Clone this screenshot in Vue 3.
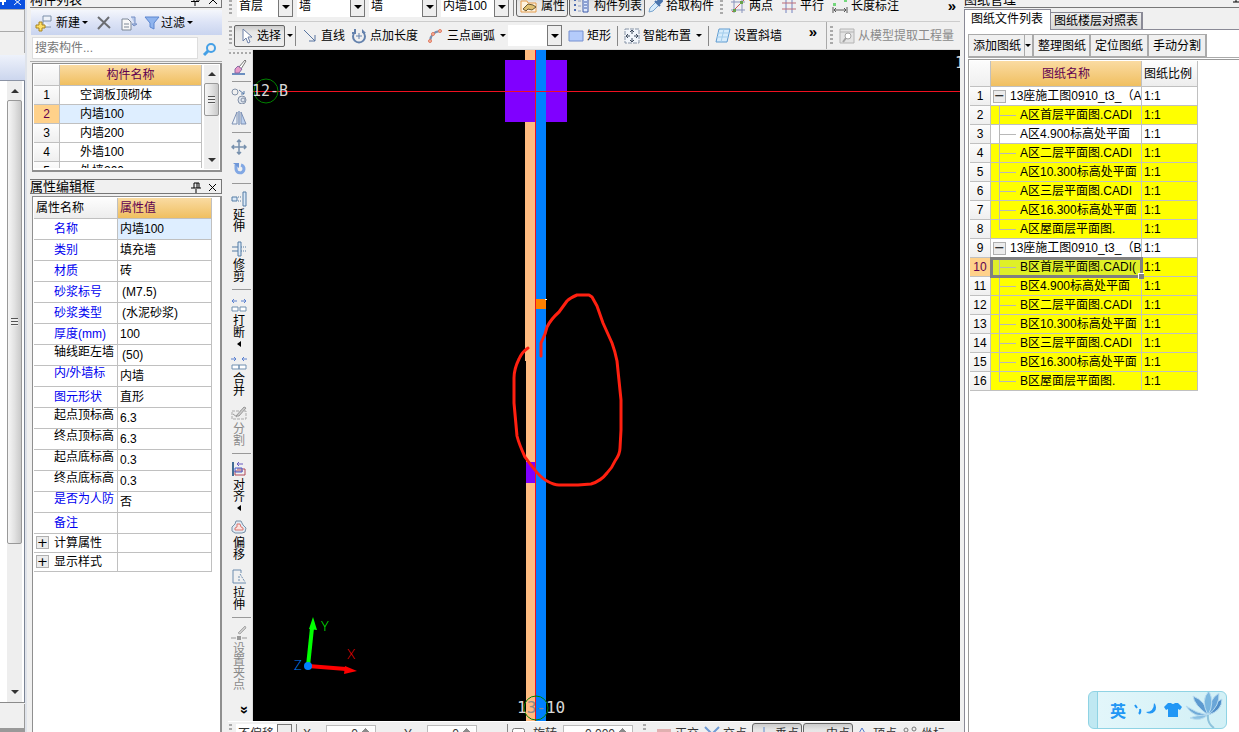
<script setup>
const components = ['空调板顶砌体', '内墙100', '内墙200', '外墙100', '外墙200']

const properties = [
  { name: '名称', value: '内墙100', selected: true },
  { name: '类别', value: '填充墙' },
  { name: '材质', value: '砖' },
  { name: '砂浆标号', value: '(M7.5)', inset: true },
  { name: '砂浆类型', value: '(水泥砂浆)', inset: true },
  { name: '厚度(mm)', value: '100' },
  { name: '轴线距左墙', value: '(50)', plain: true, inset: true },
  { name: '内/外墙标', value: '内墙', up: true },
  { name: '图元形状', value: '直形' },
  { name: '起点顶标高', value: '6.3', plain: true },
  { name: '终点顶标高', value: '6.3', plain: true },
  { name: '起点底标高', value: '0.3', plain: true },
  { name: '终点底标高', value: '0.3', plain: true },
  { name: '是否为人防', value: '否', up: true },
  { name: '备注', value: '' },
]
const groups = ['计算属性', '显示样式']

const drawings = [
  { name: '13座施工图0910_t3_（A', root: true },
  { name: 'A区首层平面图.CADI', hit: true },
  { name: 'A区4.900标高处平面' },
  { name: 'A区二层平面图.CADI', hit: true },
  { name: 'A区10.300标高处平面', hit: true },
  { name: 'A区三层平面图.CADI', hit: true },
  { name: 'A区16.300标高处平面', hit: true },
  { name: 'A区屋面层平面图.', hit: true, last: true },
  { name: '13座施工图0910_t3_（B', root: true },
  { name: 'B区首层平面图.CADI(', hit: true, selected: true },
  { name: 'B区4.900标高处平面', hit: true },
  { name: 'B区二层平面图.CADI', hit: true },
  { name: 'B区10.300标高处平面', hit: true },
  { name: 'B区三层平面图.CADI', hit: true },
  { name: 'B区16.300标高处平面', hit: true },
  { name: 'B区屋面层平面图.', hit: true, last: true },
]
</script>

<template>
  <div class="app">
    <aside class="sliver">
      <div class="sliver-title">
        <svg width="24" height="9"><path d="M3 0v5M0 1h6" stroke="#fff" stroke-width="2" /><path d="M14 5l7-6M14-1l7 6" stroke="#fff" /></svg>
      </div>
      <div class="sliver-row"></div>
      <div class="sliver-row"></div>
      <div class="sliver-bar"></div>
      <div class="sliver-list">
        <div class="scroll">
          <i class="tri up"></i>
          <div class="thumb tall"><i class="grip"></i></div>
          <span class="grow"></span>
          <i class="tri down"></i>
        </div>
      </div>
      <div class="sliver-foot"></div>
    </aside>

    <aside class="dock">
      <header class="dock-title cut">
        <span>构件列表</span>
        <svg width="32" height="14"><path d="M5 3h5v5M5 3v5M8 3v5M2 8.500h8M6 9v4" stroke="#000" fill="none" /><path d="M20 3l8 8M28 3l-8 8" stroke="#000" /></svg>
      </header>
      <div class="dock-tools">
        <button class="tool">
          <svg width="20" height="18"><path d="M8 2h8v5H8zM8 7v6h8" fill="#eef2f8" stroke="#7a8ea8" /><path d="M4 8h3v3h3v3H7v3H4v-3H1v-3h3z" fill="#ffe066" stroke="#a88320" /></svg>新建<i class="caret"></i>
        </button>
        <button class="tool" aria-label="删除"><svg width="16" height="16"><path d="M2 2l12 11M13 2L2 14" stroke="#6b6d72" stroke-width="2" /></svg></button>
        <button class="tool copy" aria-label="复制"><svg width="18" height="16"><path d="M2 4h6l3 3v8H2zM4 9h5M4 12h5" fill="#f8f8f8" stroke="#7d8796" /><path d="M11 2h4v7M14 11l-2-2h5z" fill="#b7c9ea" stroke="#7690c4" /></svg></button>
        <button class="tool">
          <svg width="16" height="16"><path d="M1 2h14L10 8v6l-4-2V8z" fill="#8fb4ee" stroke="#5c86cf" /></svg>过滤<i class="caret"></i>
        </button>
      </div>
      <div class="search">
        <input type="text" placeholder="搜索构件..." aria-label="搜索构件" />
        <button aria-label="搜索"><svg width="16" height="16"><circle cx="9" cy="7" r="4" fill="none" stroke="#45a0e6" stroke-width="2" /><path d="M6 10l-4 4" stroke="#45a0e6" stroke-width="3" /></svg></button>
      </div>
      <div class="frame list">
        <div class="list-view">
          <table class="grid comp">
            <thead><tr><th class="num"></th><th class="hot">构件名称</th></tr></thead>
            <tbody>
              <tr v-for="(c, i) in components" :key="c" :class="{ on: i === 1 }">
                <th class="num">{{ i + 1 }}</th><td>{{ c }}</td>
              </tr>
            </tbody>
          </table>
        </div>
        <div class="scroll">
          <i class="tri up"></i>
          <div class="thumb short"><i class="grip"></i></div>
          <span class="grow"></span>
          <i class="tri down"></i>
        </div>
      </div>
      <header class="dock-title boxed">
        <span>属性编辑框</span>
        <svg width="32" height="14"><path d="M5 3h5v5M5 3v5M8 3v5M2 8h10M7 9v4" stroke="#000" fill="none" /><path d="M20 4l7 7M27 4l-7 7" stroke="#000" /></svg>
      </header>
      <div class="frame props">
        <table class="grid prop">
          <thead><tr><th>属性名称</th><th class="hot">属性值</th></tr></thead>
          <tbody>
            <tr v-for="p in properties" :key="p.name">
              <th :class="{ plain: p.plain, up: p.plain || p.up }">{{ p.name }}</th>
              <td :class="{ picked: p.selected, inset: p.inset }">{{ p.value }}</td>
            </tr>
            <tr v-for="g in groups" :key="g" class="group">
              <th><button class="expander" :aria-label="g">+</button>{{ g }}</th><td></td>
            </tr>
          </tbody>
        </table>
      </div>
    </aside>

    <main class="work">
      <div class="bar first">
        <i class="handle"></i>
        <span class="combo floor"><select aria-label="楼层"><option>首层</option></select></span>
        <span class="combo wide"><select aria-label="构件大类"><option>墙</option></select></span>
        <span class="combo wide"><select aria-label="构件类型"><option>墙</option></select></span>
        <span class="combo wide"><select aria-label="构件名"><option>内墙100</option></select></span>
        <i class="sep"></i>
        <button class="tool pressed">
          <svg width="18" height="16"><path d="M1 3h6l1 2h8v9H1z" fill="#fff3df" stroke="#e59c4c" /><path d="M3 11l5-5 5 1 3 2-4 3-4-1-2 2z" fill="#dfc071" stroke="#6a5a32" /></svg>属性
        </button>
        <button class="tool pressed">
          <svg width="18" height="16"><path d="M2 1v14" stroke="#4c6bb0" stroke-dasharray="2 3" stroke-width="2" /><path d="M5 3h3M5 8h3M5 13h3" stroke="#8d9cc0" /><path d="M10 1h5v13h-5z" fill="#dfeaff" stroke="#3c5aa8" /><path d="M11 4h3M11 7h3M11 10h3" stroke="#3c5aa8" /></svg>构件列表
        </button>
        <button class="tool">
          <svg width="16" height="16"><path d="M2 14l1-4 6-6 3 3-6 6z" fill="#d8ecfb" stroke="#78a4ce" /><path d="M8 3l5 5M10 4l3-3 2 2-3 3" fill="#4a75ad" stroke="#4a75ad" stroke-width="2" /></svg>拾取构件
        </button>
        <i class="handle apart"></i>
        <button class="tool"><svg width="16" height="16"><path d="M4 1v14M12 1v14M1 4h14M1 12h14" stroke="#8793bc" /><path d="M2 14L14 2" stroke="#c55" /><path d="M3 11h3v3H3zM10 3h3v3h-3z" fill="#68a34b" /></svg>两点</button>
        <button class="tool more"><svg width="16" height="16"><path d="M5 1v14M11 1v14" stroke="#7482c0" /><path d="M1 5h14M1 11h14" stroke="#bd6b76" /></svg>平行</button>
        <button class="tool more"><svg width="16" height="16"><path d="M1 5h3v3H1zM12 1h3v3h-3z" fill="#74d77c" /><path d="M1 9v6M15 9v6M2 12h12M4 10l-2 2 2 2M12 10l2 2-2 2" fill="none" stroke="#555" /></svg>长度标注</button>
        <span class="chev">»</span>
      </div>

      <div class="bar second">
        <i class="handle"></i>
        <button class="tool pressed choose"><svg width="16" height="16"><path d="M5 1v12l3-3 2 5 2-1-2-5h4z" fill="#fff" stroke="#6c80a8" /></svg>选择</button>
        <i class="caret roomy"></i>
        <i class="sep tight"></i>
        <button class="tool"><svg width="16" height="16"><path d="M2 2l11 11M13 7v6H7" fill="none" stroke="#56739f" /></svg>直线</button>
        <button class="tool"><svg width="16" height="16"><path d="M4 4a6 6 0 1 0 8 0M4 1v4H1" fill="none" stroke="#6482ad" stroke-width="2" /><path d="M8 5v6M5 8h6" stroke="#6482ad" /><path d="M11 1l4 4h-4z" fill="#6482ad" /></svg>点加长度</button>
        <button class="tool more"><svg width="16" height="16"><path d="M2 13Q3 4 12 3" fill="none" stroke="#7b8fae" stroke-width="2" /><circle cx="2" cy="13" r="1.500" fill="#f9b7a2" stroke="#df7b61" /><circle cx="5" cy="6" r="1.500" fill="#f9b7a2" stroke="#df7b61" /><circle cx="12" cy="3" r="1.500" fill="#f9b7a2" stroke="#df7b61" /></svg>三点画弧<i class="caret"></i></button>
        <span class="combo small"><select aria-label="弧类型"><option></option></select></span>
        <button class="tool"><svg width="16" height="16"><path d="M1 3h14v10H1z" fill="#b4cbfb" stroke="#7790cf" /></svg>矩形</button>
        <i class="sep"></i>
        <button class="tool"><svg width="16" height="16"><path d="M1 1h14v14H1z" fill="#f2f6fb" stroke="#8794a7" stroke-dasharray="4 1" /><path d="M8 2v4M6 4l2-2 2 2M8 14v-4M6 12l2 2 2-2M2 8h4M4 6L2 8l2 2M14 8h-4M12 6l2 2-2 2" fill="none" stroke="#3d4a5c" /></svg>智能布置<i class="caret"></i></button>
        <i class="sep"></i>
        <button class="tool"><svg width="16" height="16"><path d="M4 1h11l-3 13H1z" fill="#d6ecfc" stroke="#5f9bd0" /><path d="M3 5h11M2 9h11M9 1L6 14" stroke="#a2cdec" /></svg>设置斜墙</button>
        <span class="chev">»</span>
        <div class="extract">
          <i class="handle"></i>
          <button class="tool" disabled><svg width="16" height="16"><path d="M1 1h14v14H1zM1 4h14" fill="#e4e4e4" stroke="#b4b4b4" /><circle cx="9" cy="8" r="3" fill="#fff" stroke="#a4a4a4" /><path d="M7 10l-3 4" stroke="#a4a4a4" stroke-width="2" /></svg>从模型提取工程量</button>
        </div>
      </div>

      <nav class="side">
        <i class="handle flat"></i>
        <button aria-label="删除"><svg width="16" height="16"><path d="M1 15h13" stroke="#6b8fc0" stroke-width="2" /><path d="M8 8l6-7 1 1-5 8z" fill="#fff" stroke="#777" /><path d="M4 10l3-3 4 3-3 4H4z" fill="#e89bc8" stroke="#8b6aa6" /></svg></button>
        <hr />
        <button aria-label="复制"><svg width="16" height="16"><circle cx="4" cy="4" r="3" fill="none" stroke="#8492a8" /><circle cx="11" cy="12" r="4" fill="#dfe5ee" stroke="#8492a8" /><circle cx="12" cy="12" r="2" fill="none" stroke="#8492a8" /><path d="M8 2l5 4M13 3v3h-3" fill="none" stroke="#567aa8" /></svg></button>
        <button aria-label="镜像"><svg width="16" height="16"><path d="M6 2v12H1z" fill="#eef3fa" stroke="#7d90b3" /><path d="M10 2v12h5z" fill="#bcd0ee" stroke="#7d90b3" /><path d="M8 1v14" stroke="#5577ac" /></svg></button>
        <hr />
        <button aria-label="移动"><svg width="16" height="16"><path d="M8 1v14M1 8h14M6 3l2-2 2 2M6 13l2 2 2-2M3 6L1 8l2 2M13 6l2 2-2 2" fill="none" stroke="#7790ad" stroke-width="1.500" /></svg></button>
        <button aria-label="旋转"><svg width="16" height="16"><path d="M5 4v4a4 4 0 1 0 5-4" fill="none" stroke="#82a8e4" stroke-width="3" /><path d="M2 2h6v5z" fill="#6f97d8" /></svg></button>
        <hr />
        <button><svg width="16" height="16"><path d="M1 6h5v4H1zM12 1h3v14h-3z" fill="#dbe9f7" stroke="#547ca5" /><path d="M7 6h4M7 10h4" stroke="#547ca5" stroke-dasharray="1 1" /></svg><span>延伸</span></button>
        <button><svg width="16" height="16"><path d="M7 1h3v14H7z" fill="#dbe9f7" stroke="#547ca5" /><path d="M1 6h6M1 10h6" stroke="#547ca5" /><path d="M10 6h6M10 10h6" stroke="#547ca5" stroke-dasharray="1 1" /></svg><span>修剪</span></button>
        <hr />
        <button><svg width="16" height="16"><path d="M6 4H1M3 2L1 4l2 2M10 4h5M13 2l2 2-2 2" fill="none" stroke="#5a80d0" /><path d="M1 10h6v4H1zM9 10h6v4H9z" fill="#fff" stroke="#7090b0" /></svg><span>打断</span><i class="left"></i></button>
        <button><svg width="16" height="16"><path d="M0 4h5M3 2l2 2-2 2M16 4h-5M13 2l-2 2 2 2" fill="none" stroke="#5a80d0" /><path d="M1 10h7v4H1zM8 10h7v4H8z" fill="#fff" stroke="#7090b0" /></svg><span>合并</span></button>
        <button disabled><svg width="16" height="16"><path d="M1 6h14v8H1z" fill="#eee" stroke="#aaa" stroke-dasharray="3 1" /><path d="M5 11l8-9 2 1-7 8zM2 9l4 3" fill="#ccc" stroke="#999" /></svg><span>分割</span></button>
        <hr />
        <button><svg width="16" height="16"><path d="M2 1v14" stroke="#426d95" stroke-width="2" /><path d="M6 8h8v6H4v-4h8" fill="none" stroke="#b04858" /><path d="M4 7h7v4H4z" fill="none" stroke="#4760d0" /><path d="M6 3h6M8 1L6 3l2 2" fill="none" stroke="#665bc0" /></svg><span>对齐</span><i class="left"></i></button>
        <button><svg width="16" height="16"><path d="M5 2h5l2 4 3 3-1 4-3 1H4l-3-2V8l3-3z" fill="#e0eaf3" stroke="#7890a8" /><path d="M6 5h3l1 3 2 1v2H4V9l2-1z" fill="#fde3df" stroke="#db776f" /></svg><span>偏移</span></button>
        <button><svg width="16" height="16"><path d="M10 1H2v13h13M10 1v3" fill="none" stroke="#6c8cae" /><path d="M9 5l5 8M8 7v5" stroke="#6c8cae" stroke-dasharray="2 1" /></svg><span>拉伸</span></button>
        <hr />
        <button disabled><svg width="16" height="16"><path d="M0 13h5M11 13h5" stroke="#999" /><path d="M6 11h4v4H6z" fill="#999" /><path d="M7 8l7-7 1 2-6 6z" fill="#ccc" stroke="#aaa" /></svg><span>设置夹点</span></button>
        <b class="more-down">»</b>
      </nav>

      <svg class="canvas">
        <g transform="translate(-253 -50)">
          <rect x="525" y="50" width="10" height="311" fill="#ffbb80" />
          <rect x="526" y="361" width="9" height="360" fill="#ffbb80" />
          <rect x="505" y="60" width="62" height="62" fill="#8000ff" />
          <rect x="526" y="462" width="9" height="21" fill="#8000ff" />
          <rect x="536" y="50" width="10" height="671" fill="#0080ff" />
          <rect x="536" y="299" width="10" height="10" fill="#ff8000" />
          <rect x="545" y="299" width="2" height="1" fill="#fff" />
          <rect x="535" y="50" width="1" height="671" fill="#f01020" />
          <rect x="253" y="91" width="2000" height="1" fill="#f01020" />
          <g fill="none" stroke="#008000">
            <circle cx="266" cy="91" r="12" />
            <circle cx="536" cy="708" r="12" />
          </g>
          <g class="axis-name">
            <text x="252" y="96">12-B</text>
            <text x="517" y="713" class="big">1<tspan class="dim">3-</tspan>10</text>
            <text x="955" y="68">1</text>
          </g>
          <path d="M308 666L312 628" stroke="#0f0" stroke-width="4" />
          <path d="M313 617l4 13-8-1z" fill="#0f0" />
          <path d="M308 666L346 669" stroke="#f00" stroke-width="4" />
          <path d="M357 671l-13 3 1-8z" fill="#f00" />
          <circle cx="308" cy="666" r="4" fill="#0080ff" />
          <g class="axis-letter">
            <text x="321" y="631" fill="#0f0">Y</text>
            <text x="347" y="659" fill="#f00">X</text>
            <text x="294" y="670" fill="#0080ff">Z</text>
          </g>
          <path
            d="M528 348Q522 352 519 359Q514 369 514 378L514 403L517 436Q519 444 525 457Q530 464 535 470Q540 477 547 481Q554 485 559 485H578L591 484Q601 481 607 473Q612 468 615 461Q620 454 620 448L621 430V400L617 361Q615 351 612 343L603 323L597 306L592 297L589 295H577Q570 298 567 301L559 312Q551 319 547 327L545 334L541 343V356"
            fill="none" stroke="#ff2010" stroke-width="3" stroke-linecap="round" stroke-linejoin="round"
          />
        </g>
      </svg>

      <footer class="status">
        <div class="status-in">
          <i class="handle"></i>
          <span class="combo offset"><select aria-label="偏移方式"><option>不偏移</option></select></span>
          <i class="sep"></i>
          <label>X=<input type="number" value="0" /></label>
          <label class="second-num">Y=<input type="number" value="0" /></label>
          <i class="sep far"></i>
          <label class="turn"><input type="checkbox" />旋转</label>
          <label><input type="number" value="0.000" step="0.001" class="long" aria-label="角度" /></label>
          <i class="handle apart"></i>
          <button class="tool"><svg width="16" height="16"><path d="M1 3h14v10H1z" fill="#e0b0b0" /></svg>正交</button>
          <button class="tool"><svg width="16" height="16"><path d="M1 1l14 14M15 1L1 15" stroke="#6f9ad4" stroke-width="2" /></svg>交点</button>
          <button class="tool pressed"><svg width="16" height="16"><path d="M8 1v12M2 13h13" stroke="#5d88cc" /></svg>垂点</button>
          <button class="tool pressed"><svg width="16" height="16"><path d="M1 8h14M8 6v4" stroke="#5d88cc" /></svg>中点</button>
          <button class="tool"><svg width="16" height="16"><path d="M1 14L8 2l7 12" fill="none" stroke="#5277cc" /></svg>顶点</button>
          <button class="tool"><svg width="16" height="16"><circle cx="4" cy="4" r="2" fill="none" stroke="#777" /><circle cx="12" cy="3" r="2" fill="none" stroke="#777" /></svg>坐标</button>
        </div>
      </footer>
    </main>

    <aside class="sheets">
      <header class="sheets-title">
        <span>图纸管理</span>
        <svg width="6" height="14"><path d="M2 2h4M3 2v7M0 9h6" stroke="#000" fill="none" /></svg>
      </header>
      <div class="tabs" role="tablist">
        <button class="tab active" role="tab">图纸文件列表</button>
        <button class="tab" role="tab">图纸楼层对照表</button>
      </div>
      <div class="sheet-body">
        <div class="sheet-tools">
          <button>添加图纸</button>
          <button class="drop" aria-label="更多"><i class="caret"></i></button>
          <button>整理图纸</button>
          <button>定位图纸</button>
          <button>手动分割</button>
        </div>
        <div class="sheet-list">
          <table class="grid sheet">
            <thead><tr><th class="num"></th><th class="hot">图纸名称</th><th>图纸比例</th></tr></thead>
            <tbody>
              <tr v-for="(d, i) in drawings" :key="d.name" :class="{ hit: d.hit, cur: d.selected }">
                <th class="num">{{ i + 1 }}</th>
                <td class="name">
                  <div class="leaf">
                    <button v-if="d.root" class="expander" :aria-label="d.name">−</button>
                    <i v-else class="branch" :class="{ last: d.last }"></i>
                    <span>{{ d.name }}</span>
                  </div>
                </td>
                <td>1:1</td>
              </tr>
            </tbody>
          </table>
        </div>
      </div>
    </aside>

    <div class="ime">
      <span>英</span>
      <svg width="52" height="20"><path d="M3 5l2 3M8 9q1 3-1 5" stroke="#2297f5" stroke-width="2" fill="none" /><path d="M22 3a6 6 0 1 1-8 9q8 0 8-9z" fill="#2297f5" /><path d="M36 3h3q2 2 4 0h3l4 4-2 3-2-1v8H36V9l-2 1-2-3z" fill="#2297f5" /></svg>
      <svg class="flower" width="44" height="38"><g stroke="#b9dcf0" stroke-width="1"><path d="M26 24Q14 22 4 15Q12 28 26 24z" fill="#71abd8" /><path d="M26 24Q12 14 11 5Q24 10 26 24z" fill="#5d9ad0" /><path d="M26 24Q14 24 8 27Q18 31 26 24z" fill="#8bc0e2" /><path d="M26 24Q30 12 40 8Q40 20 26 24z" fill="#4f8cc6" /><path d="M26 24Q27 8 37 2Q38 15 26 24z" fill="#6aa6d8" /><path d="M26 24Q18 9 27 0Q33 12 26 24z" fill="#79b6df" /></g><path d="M26 24q-1 8 6 13" stroke="#8fc4dd" fill="none" stroke-width="2" /></svg>
    </div>
  </div>
</template>

<style>
html, body, #app { height: 100%; }
body { overflow: hidden; }
</style>

<style scoped>
* { box-sizing: border-box; }
.app {
  display: grid;
  grid-template-columns: 30px 192px minmax(0, 1fr) 275px;
  grid-template-rows: minmax(0, 1fr);
  height: 100%;
  overflow: hidden;
  background: #f0f0f0;
  color: #000;
  font: 12px/14px "Liberation Sans", "Noto Sans CJK SC", sans-serif;
}
button, input, select { font: inherit; color: inherit; margin: 0; padding: 0; border: 0; background: none; }
button:disabled { color: #8a8a8a; }
svg { display: block; flex: none; }
i { font-style: normal; flex: none; }
.grow { flex: 1; }

/* left edge panel */
.sliver { display: flex; flex-direction: column; min-height: 0; margin-right: 3px; border-right: 2px solid #dfe3ea; }
.sliver-title { height: 9px; background: #0a50e0; }
.sliver-row { height: 22px; border: solid #aaa; border-width: 1px 1px 0 0; }
.sliver-bar { height: 26px; margin-top: 2px; border-bottom: 1px solid #8b93a4; background: linear-gradient(#eef2fb, #ccd6ee); }
.sliver-list { flex: 1; min-height: 0; display: flex; justify-content: flex-end; padding-right: 2px; background: #fff; border-right: 1px solid #7a8394; border-bottom: 1px solid #8b8b8b; }
.sliver-foot { height: 28px; border: solid #999; border-width: 0 1px 4px 0; margin-top: 1px; }
.scroll { display: flex; flex-direction: column; align-items: center; width: 15px; background: #eee; padding: 8px 0; }
.tri { border: solid transparent; border-width: 0 4px; }
.tri.up { border-bottom: 4px solid #333; }
.tri.down { border-top: 4px solid #333; }
.thumb { display: flex; align-items: center; justify-content: center; width: 15px; margin-top: 7px; border: 1px solid #999; border-radius: 2px; background: linear-gradient(90deg, #f6f6f6, #e2e2e2 50%, #c9c9c9); }
.thumb.tall { height: 70%; flex: 0 1 444px; }
.thumb.short { height: 33px; }
.grip { width: 7px; height: 8px; background: repeating-linear-gradient(#555 0 1px, #eee 1px 3px); }

/* component dock */
.dock { display: flex; flex-direction: column; min-height: 0; min-width: 0; }
.dock-title { display: flex; flex: none; align-items: center; justify-content: space-between; font-size: 13px; height: 14px; border: solid #777; border-width: 0 1px 1px 0; }
.dock-title.cut { height: 16px; margin-top: -8px; }
.dock-title.boxed { border-width: 1px; border-left: 0; height: 15px; line-height: 12px; margin: 7px 0 2px; }
.tool { display: flex; flex: none; align-items: center; gap: 3px; white-space: nowrap; }
.caret { width: 6px; border: solid transparent; border-width: 3px 3px 0; border-top-color: #000; }
.dock-tools { display: flex; align-items: center; gap: 8px; flex: none; height: 25px; margin: 2px 0 2px 1px; padding-left: 4px; background: linear-gradient(#f4f6fc, #dce3f6 50%, #c9d4ef); }
.dock-tools .tool { gap: 1px; }
.dock-tools .caret { margin-left: 1px; }
.dock-tools .copy { margin-right: -2px; }
.search { display: flex; flex: none; height: 25px; margin-bottom: 1px; border-bottom: 1px solid #aaa; }
.search input { flex: 1; min-width: 0; height: 22px; margin-left: 2px; padding: 0 2px; background: #fff; border: 1px solid #ddd; }
.search input::placeholder { color: #777; opacity: 1; }
.search button { padding: 0 4px; }
.frame { margin-left: 2px; border: 1px solid #8f8f8f; background: #fff; padding: 1px; }
.frame.list { display: flex; height: 109px; flex: none; border-width: 1px 2px 2px 1px; }
.list-view { flex: 1; overflow: hidden; min-width: 0; margin-bottom: 1px; }
.list .scroll { width: 15px; margin-left: 2px; padding: 7px 0; }
.grid { border-collapse: separate; border-spacing: 0; table-layout: fixed; }
.grid th, .grid td { padding: 0; font-weight: 400; text-align: left; white-space: nowrap; overflow: hidden; border: solid #c0c0c0; border-width: 0 1px 1px 0; line-height: 14px; }
.grid thead th { background: linear-gradient(#fdfdfd, #ededed); }
.grid thead .hot { background: linear-gradient(#fadba2, #f0bf60); color: #600050; }
.grid .num { text-align: center; background: linear-gradient(#fcfcfc, #efefef); }
.comp { width: 100%; }
.comp .num { width: 26px; }
.comp .hot { text-align: center; }
.comp thead th { height: 21px; }
.comp tbody th, .comp tbody td { height: 19px; }
.comp td { padding-left: 20px; }
.comp .on .num, .grid .cur .num { background: #ffd18a; color: #600050; }
.comp .on td { background: #deeeff; }
.frame.props { flex: 1; min-height: 0; overflow: hidden; border-right-width: 2px; border-bottom: 0; }
.prop { width: 178px; }
.prop thead th { height: 21px; padding-left: 2px; }
.prop thead th:first-child { width: 84px; }
.prop tbody th { height: 21px; padding-left: 20px; color: #0000f0; }
.prop tbody td { padding-left: 2px; }
.prop tbody td.inset { padding-left: 4px; }
.prop .picked { background: #deeeff; }
.prop tbody th.plain { color: #000; }
.prop tbody th.up { vertical-align: top; }
.prop .group th { height: 19px; padding-left: 2px; color: #000; }
.expander { display: inline-block; flex: none; width: 13px; height: 13px; margin-right: 5px; border: 1px solid #b0b0b0; background: #ececec; font: 13px/10px "DejaVu Sans", sans-serif; text-align: center; vertical-align: top; }

/* drawing area */
.work { display: grid; grid-template-columns: 25px minmax(0, 1fr); grid-template-rows: 22px 28px minmax(0, 1fr) 11px; margin: 0 4px 0 6px; min-width: 0; min-height: 0; }
.bar { grid-column: 1 / -1; display: flex; align-items: center; padding-left: 1px; min-width: 0; }
.bar.first { height: 31px; margin-top: -9px; border-bottom: 1px solid #ccc; }
.bar.second { border-bottom: 1px solid #ddd; }
.handle { width: 3px; height: 20px; background: repeating-linear-gradient(#aaa 0 2px, transparent 2px 4px); }
.handle.flat { width: 23px; height: 2px; background: repeating-linear-gradient(90deg, #aaa 0 2px, transparent 2px 4px); }
.sep { width: 1px; height: 20px; margin: 0 6px 0 4px; background: #888; }
.combo { position: relative; display: flex; flex: none; width: 56px; height: 21px; margin-left: 4px; background: #fff; }
.combo select { appearance: none; width: 100%; padding: 0 14px 0 2px; border-radius: 0; outline: 0; }
.combo::before { content: ""; position: absolute; inset: 0 0 0 auto; width: 13px; border: 1px solid #777; background: #eee; pointer-events: none; }
.combo::after { content: ""; position: absolute; right: 3px; top: 9px; border: solid transparent; border-width: 4px 4px 0; border-top-color: #000; pointer-events: none; }
.combo.floor { margin-left: 5px; }
.combo.wide { width: 68px; }
.combo.small { width: 54px; margin-left: 2px; }
.pressed { height: 22px; padding: 0 2px 0 3px; border: 1px solid #666; border-radius: 3px; background: linear-gradient(#ccc, #e6e6e6 30%, #eee); }
.first .pressed + .tool { margin-left: 1px; }
.first .pressed + .tool:not(.pressed) { margin-left: 2px; }
.first .sep { margin-right: 2px; }
.handle.apart { margin: 0 7px 0 6px; }
.chev { margin: -8px 9px 0 auto; font: 700 15px/14px "Liberation Sans", sans-serif; }
.first .chev { margin: 0 4px 0 auto; }
.tool.more { margin-left: 8px; }
.choose { width: 51px; margin-left: 2px; border-radius: 2px; }
.caret.roomy { margin: 0 2px; }
.sep.tight { margin: 0; }
.second .tool { margin-left: 6px; }
.second .tool.choose { margin-left: 2px; }
.second .tool.more { margin-left: 10px; }
.second .sep + .tool { margin-left: 0; }
.second .sep { margin: 0 6px; }
.second .sep.tight { margin: 0 6px 0 0; }
.second .tool .caret { margin-left: 2px; }
.extract { display: flex; align-items: center; flex: none; height: 27px; width: 134px; padding-left: 3px; border-left: 1px solid #aaa; }

.side { display: flex; flex-direction: column; align-items: flex-start; gap: 6px; padding: 2px 0 4px 1px; min-height: 0; overflow: hidden; border-right: 1px solid #ddd; }
.side .handle { margin-bottom: -1px; }
.side button { display: flex; flex-direction: column; align-items: center; gap: 2px; width: 18px; margin-left: 1px; }
.side button:has(span) { margin-top: 1px; }
.side button:has(span) + button { margin-top: 2px; }
.side span { width: 12px; line-height: 12px; word-break: break-all; }
.side hr { width: 19px; height: 1px; margin: 0 0 0 3px; border: 0; background: #999; flex: none; }
.side .left { border: solid transparent; border-width: 3px 4px 3px 0; border-right-color: #000; }
.more-down { width: 14px; height: 14px; margin: auto 0 0 8px; font: 700 15px/12px "Liberation Sans", sans-serif; transform: rotate(90deg); text-align: center; flex: none; }
.canvas { width: 100%; height: 100%; background: #000; overflow: hidden; }
.axis-name { font: 15px "DejaVu Sans Mono", monospace; fill: #d8d8d8; }
.axis-name .big { font-size: 16px; }
.axis-name .dim { fill: #8a8a8a; }
.axis-letter { font: 300 13px Lato, sans-serif; }

.status { grid-column: 1 / -1; overflow: hidden; }
.status-in { display: flex; align-items: center; height: 25px; padding-left: 1px; color: #333; border-top: 1px solid #fff; white-space: nowrap; }
.status label { display: flex; flex: none; align-items: center; gap: 8px; }
.status input[type="number"] { width: 50px; height: 19px; padding: 0 2px; border: 1px solid #bbb; background: #fff; text-align: right; }
.status input[type="number"]::-webkit-inner-spin-button { opacity: 1; }
.status input.long { width: 70px; margin-left: 6px; }
.status input[type="checkbox"] { width: 13px; height: 13px; }
.status .second-num { margin-left: 28px; }
.status .far { margin-left: 30px; margin-right: 4px; }
.status .tool { margin-right: 5px; }
.status .handle.apart { margin: 0 10px; }
.status .tool.pressed { width: 50px; margin-right: 1px; }
.status .combo.offset { width: 56px; }

/* drawing sheets */
.sheets { display: flex; flex-direction: column; min-width: 0; min-height: 0; background: #f0f0f0; }
.sheets-title { display: flex; flex: none; justify-content: space-between; align-items: center; height: 16px; margin-top: -8px; font-size: 13px; border-bottom: 1px solid #777; }
.tabs { display: flex; align-items: flex-end; flex: none; height: 21px; margin-top: 1px; border-bottom: 1px solid #8a8a96; }
.tab { height: 17px; padding: 0 3px; border: solid #8a8a96; border-width: 1px 2px 0 0; background: linear-gradient(#f0f0f0, #d8d8d8); }
.tab.active { height: 21px; margin-bottom: -1px; padding: 0 7px 2px 6px; background: #fff; border-left-width: 1px; border-right-width: 1px; }
.sheet-body { display: flex; flex-direction: column; flex: 1; min-height: 0; padding: 4px 0 0 3px; border-left: 1px solid #8a8a96; background: #fff; }
.sheet-tools { display: flex; flex: none; height: 24px; border-bottom: 1px solid #aaa; }
.sheet-tools button { height: 23px; padding: 0 4px; border: solid #aaa; border-width: 1px 2px 1px 0; background: #f0f0f0; white-space: nowrap; }
.sheet-tools button:first-child { border-left-width: 1px; border-right-width: 1px; padding-right: 3px; }
.sheet-tools .drop { padding: 0; width: 9px; }
.sheet-tools .drop + button { padding-right: 3px; }
.drop .caret { display: block; }
.sheet-list { flex: 1; min-height: 0; overflow: hidden; margin-top: 1px; padding: 1px; border: solid #999; border-width: 1px 0 0 1px; }
.sheet { width: 228px; }
.sheet .num { width: 21px; }
.sheet thead .hot { width: 151px; text-align: center; }
.sheet thead th { height: 26px; }
.sheet thead th:last-child { padding-left: 2px; }
.sheet tbody th, .sheet tbody td { height: 19px; }
.sheet tbody td { padding-left: 2px; }
.sheet tbody td.name { padding: 0; }
.leaf { display: flex; align-items: center; height: 18px; }
.leaf .expander { margin-left: 2px; margin-right: 4px; }
.branch { width: 29px; height: 18px; background: linear-gradient(#b8b8b8, #b8b8b8) 8px 0 / 1px 100% no-repeat, linear-gradient(#b8b8b8, #b8b8b8) 8px 9px / 17px 1px no-repeat; }
.branch.last { background-size: 1px 9px, 17px 1px; }
.hit td { background: #ff0; }
.hit.cur td.name { background: #dff028; outline: 3px solid #808080; outline-offset: -2px; position: relative; overflow: visible; }
.cur td.name::after { content: ""; position: absolute; right: -3px; bottom: -3px; width: 5px; height: 5px; background: #808080; border: solid #fff; border-width: 1px 0 0 1px; }

/* input method bar floating over the window */
.ime { position: absolute; right: 12px; bottom: 3px; display: flex; align-items: center; gap: 6px; width: 139px; height: 38px; padding-left: 21px; border: 1px solid #8fd3e4; border-radius: 6px; background: linear-gradient(90deg, #bfe8f2 0 8px, #8fd3e4 8px 9px, #e2f6fa 9px, #d2f0f6); color: #2297f5; overflow: hidden; }
.ime span { font: 700 16px/20px "Noto Sans CJK SC", sans-serif; }
.ime .flower { margin-left: -8px; }
</style>
